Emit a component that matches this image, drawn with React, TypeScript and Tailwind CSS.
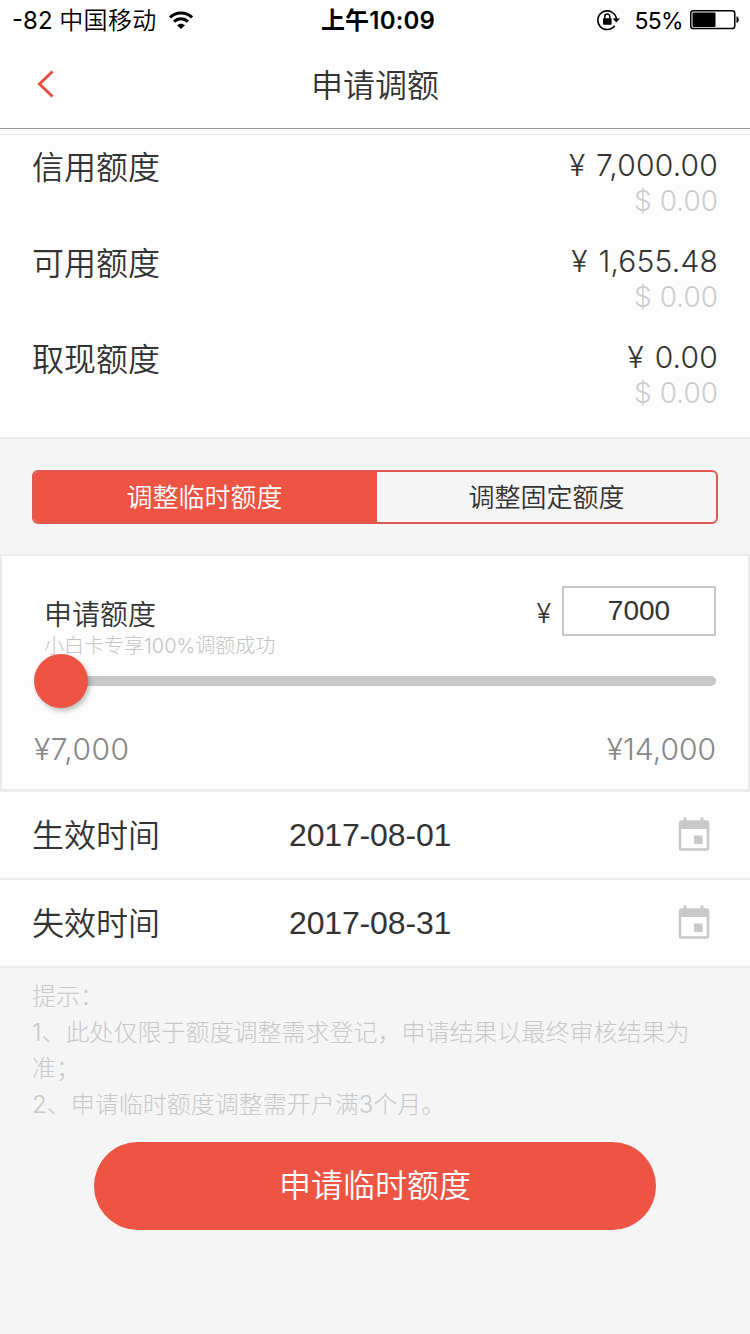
import React from "react";

const limits = [
  { label: "信用额度", cny: "7,000.00", usd: "0.00" },
  { label: "可用额度", cny: "1,655.48", usd: "0.00" },
  { label: "取现额度", cny: "0.00", usd: "0.00" },
];

const dates = [
  { label: "生效时间", value: "2017-08-01" },
  { label: "失效时间", value: "2017-08-31" },
];

function WifiIcon() {
  return (
    <svg width="24" height="19" viewBox="0 0 24 19" fill="none" stroke="#000" strokeWidth="3">
      <path d="M1 6.4C7 .4 17 .4 23 6.4" />
      <path d="M5 10.6c4-3.9 10-3.9 14 0" />
      <path d="M8 14.2c2.3-2.1 5.7-2.1 8 0L12 18z" fill="#000" stroke="none" />
    </svg>
  );
}

function RotationLockIcon() {
  return (
    <svg width="24" height="22" viewBox="0 0 24 22" fill="none">
      <path d="M17.6 16.8A9.3 9.3 0 1 1 19.4 10" stroke="#000" strokeWidth="1.6" />
      <path d="M15.6 9.4h7.4l-3.7 4.2z" fill="#000" />
      <rect x="6" y="9.2" width="8.6" height="6.6" rx="0.8" fill="#000" />
      <path d="M7.8 9.6V7.6a2.5 2.5 0 0 1 5 0v2" stroke="#000" strokeWidth="1.5" />
    </svg>
  );
}

function BatteryIcon() {
  return (
    <svg width="50" height="20" viewBox="0 0 50 20" fill="none">
      <rect x="0.75" y="0.75" width="44" height="17.8" rx="2.6" stroke="#000" strokeWidth="1.5" />
      <rect x="2.5" y="2.5" width="23" height="14.5" rx="1" fill="#000" />
      <path d="M46.5 6.3c3 .8 3 6 0 6.8z" fill="#000" />
    </svg>
  );
}

function CalendarIcon() {
  return (
    <svg width="32" height="36" viewBox="0 0 32 36" fill="none">
      <rect x="5.5" y="0.5" width="3" height="5" fill="#c8c8c8" />
      <rect x="22.5" y="0.5" width="3" height="5" fill="#c8c8c8" />
      <rect x="2" y="5" width="28" height="27.5" rx="1" stroke="#c8c8c8" strokeWidth="2.6" />
      <rect x="1" y="3.5" width="30" height="8.5" rx="1" fill="#c8c8c8" />
      <rect x="16" y="18.5" width="8.5" height="8.5" fill="#c8c8c8" />
    </svg>
  );
}

function StatusBar() {
  return (
    <div className="grid h-10 grid-cols-3 items-center pt-0.5 text-[24px] leading-[38px] text-black">
      <div className="flex items-center pl-3">
        <span className="font-normal whitespace-pre">-82 </span>
        <span className="font-[350] tracking-[0.3px]">中国移动</span>
        <span className="mb-0.5 ml-[13px]">
          <WifiIcon />
        </span>
      </div>
      <div className="pl-1.5 text-center font-semibold tracking-[0.2px]">上午10:09</div>
      <div className="flex items-center justify-end pr-2.5">
        <span className="mb-0.5">
          <RotationLockIcon />
        </span>
        <span className="mr-[7px] ml-3.5 text-[23px] font-normal tracking-[-0.7px]">55%</span>
        <span className="mb-0.5">
          <BatteryIcon />
        </span>
      </div>
    </div>
  );
}

export default function App() {
  return (
    <div className="flex h-[1334px] w-[750px] flex-col overflow-hidden bg-[#f5f5f5] font-['Inter','Noto_Sans_CJK_SC',sans-serif] font-light text-[#333]">
      <header className="h-[129px] border-b border-[#999] bg-[#fdfdfd]">
        <StatusBar />
        <div className="grid h-[88px] grid-cols-[1fr_auto_1fr] items-center">
          <svg className="ml-9" width="20" height="30" viewBox="0 0 20 30" fill="none">
            <path d="M16.5 2.5 3.5 15l13 12.5" stroke="#e94f3f" strokeWidth="3" />
          </svg>
          <h1 className="pt-1 text-[32px] leading-[84px] font-[350]">申请调额</h1>
        </div>
      </header>

      <section className="h-[310px] border-b-2 border-[#ebebeb] bg-[#fdfdfd]">
        <div className="mb-[11px] h-1.5 border-b border-[#eee]" />
        {limits.map((item) => (
          <div key={item.label} className="flex h-24 justify-between pr-8 pl-8">
            <div className="pt-0.5 text-[32px] leading-10 font-[350]">{item.label}</div>
            <div className="text-right">
              <div className="text-[30px] leading-[38px] tracking-[0.2px] [word-spacing:2px]">¥ {item.cny}</div>
              <div className="text-[28px] leading-[34px] text-[#ccc]">$ {item.usd}</div>
            </div>
          </div>
        ))}
      </section>

      <div className="h-[115px] px-8 pt-[31px]">
        <div className="flex h-[54px] overflow-hidden rounded-md border-2 border-[#dd5b4e] text-[26px] leading-[50px] font-[350]">
          <div className="-my-0.5 -ml-0.5 w-[345px] bg-[#ed5444] pt-[3px] text-center text-white">调整临时额度</div>
          <div className="flex-1 pt-px text-center">调整固定额度</div>
        </div>
      </div>

      <section className="h-[238px] border-2 border-b-[3px] border-[#ebebeb] bg-[#fdfdfd] px-8">
        <div className="flex h-[97px] justify-between pt-[30px]">
          <div className="pt-px pl-2.5">
            <div className="text-[28px] leading-[56px] font-[350]">申请额度</div>
            <div className="-mt-[9px] text-[20px] leading-6 text-[#c4c4c4]">小白卡专享100%调额成功</div>
          </div>
          <div className="flex">
            <span className="mr-[11px] text-[27px] leading-[56px]">¥</span>
            <div className="h-[50px] w-[154px] border-2 border-[#c8c8c8] text-center font-['Liberation_Sans',sans-serif] text-[28px] leading-[46px] font-normal">
              7000
            </div>
          </div>
        </div>
        <div className="flex h-[56px] items-center">
          <div className="z-10 h-[54px] w-[54px] rounded-full bg-[#ed5444] shadow-[2px_3px_5px_rgba(0,0,0,0.25)]" />
          <div className="-ml-2 h-2.5 flex-1 rounded-full bg-[#c8c8c8]" />
        </div>
        <div className="flex justify-between pt-5 text-[30px] leading-10 text-[#888]">
          <span className="tracking-[0.5px]">¥7,000</span>
          <span>¥14,000</span>
        </div>
      </section>

      {dates.map((item) => (
        <div key={item.label} className="flex h-[88px] shrink-0 items-center border-b-2 border-[#ebebeb] bg-[#fdfdfd] pr-10 pl-8">
          <span className="w-[257px] pt-0.5 text-[32px] leading-[84px] font-[350]">{item.label}</span>
          <span className="flex-1 font-['Liberation_Sans',sans-serif] text-[32px] leading-[86px] font-normal tracking-[-0.15px]">{item.value}</span>
          <CalendarIcon />
        </div>
      ))}

      <div className="px-8 pt-[11px] text-[24px] leading-9 text-[#c8c8c8]">
        <p>提示：</p>
        <p>
          1、此处仅限于额度调整需求登记，申请结果以最终审核结果为
          <br />
          准；
        </p>
        <p>2、申请临时额度调整需开户满3个月。</p>
      </div>

      <button className="mx-[94px] mt-[19px] h-[88px] shrink-0 rounded-full bg-[#ed5444] text-[32px] leading-[88px] font-[350] text-white">
        申请临时额度
      </button>
    </div>
  );
}
